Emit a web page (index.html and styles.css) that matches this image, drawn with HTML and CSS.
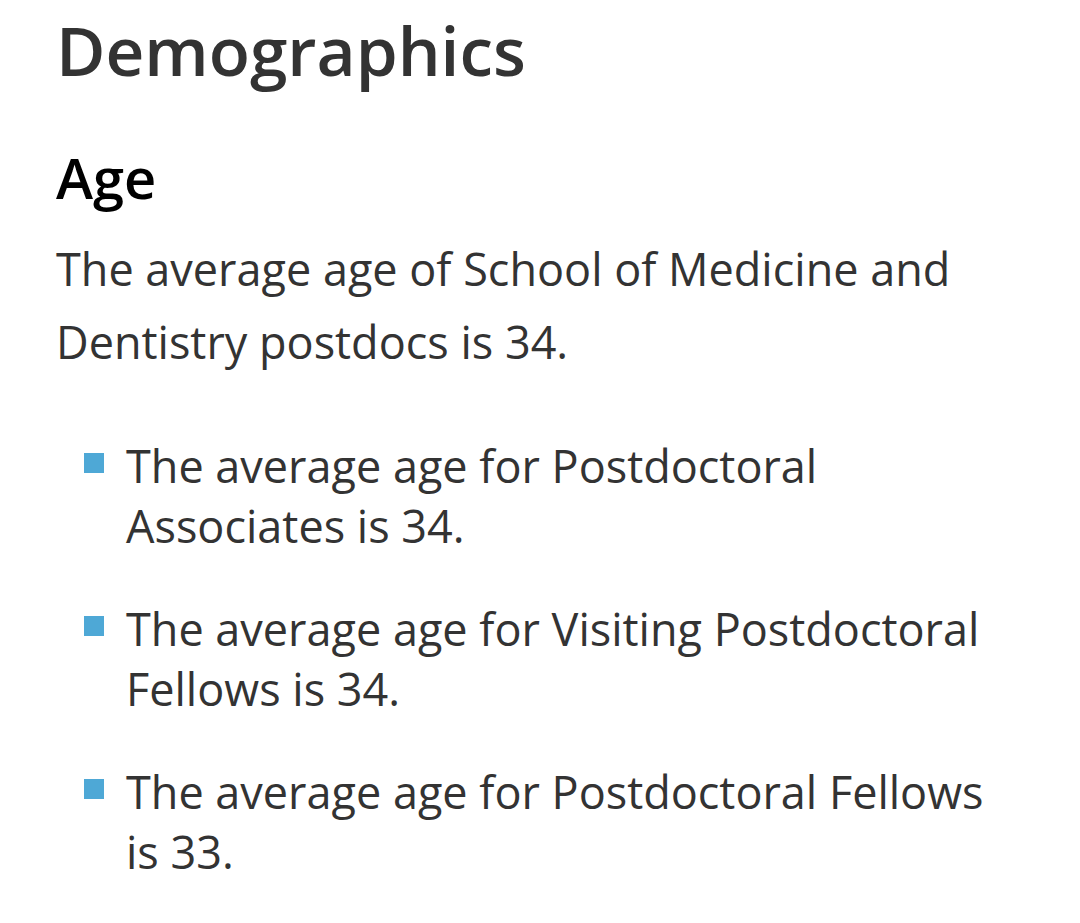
FILE: index.html
```html
<!DOCTYPE html>
<html lang="en">
<head>
<meta charset="utf-8">
<title>Demographics</title>
<link rel="stylesheet" href="styles.css">
</head>
<body>
<main class="content">
  <h2 class="page-title">Demographics</h2>
  <h3 class="section-title">Age</h3>
  <p class="lead">The average age of School of Medicine and Dentistry postdocs is 34.</p>
  <ul class="facts">
    <li class="fact">The average age for Postdoctoral Associates is 34.</li>
    <li class="fact">The average age for Visiting Postdoctoral Fellows is 34.</li>
    <li class="fact">The average age for Postdoctoral Fellows is 33.</li>
  </ul>
</main>
</body>
</html>
```

FILE: styles.css
```css
html, body {
  margin: 0;
  padding: 0;
  background: #ffffff;
}

body {
  font-family: "Open Sans", "Liberation Sans", sans-serif;
  color: #333333;
}

.content {
  width: 944px;
  padding: 8px 0 0 56px;
}

.page-title {
  margin: 0;
  font-size: 67.5px;
  line-height: 84px;
  font-weight: 600;
  color: #333333;
}

.section-title {
  margin: 52px 0 0;
  font-size: 56px;
  line-height: 67px;
  font-weight: 600;
  color: #000000;
}

.lead {
  margin: 21px 0 0;
  font-size: 45px;
  line-height: 73px;
}

.facts {
  list-style: none;
  margin: 58px 0 0;
  padding: 0 0 0 70px;
}

.fact {
  position: relative;
  font-size: 45px;
  line-height: 60px;
  margin-bottom: 43px;
}

.fact::before {
  content: "";
  position: absolute;
  left: -42px;
  top: 17px;
  width: 20px;
  height: 20px;
  background: #4ea8d6;
}
```
